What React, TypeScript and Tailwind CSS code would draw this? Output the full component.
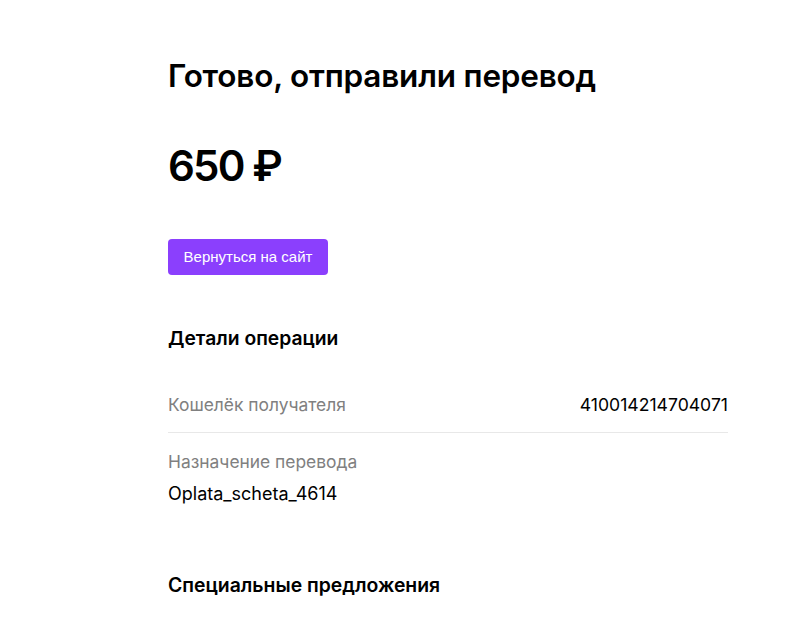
export default function App() {
  return (
    <div className="min-h-[642px] w-full bg-white font-['Inter',sans-serif] text-black">
      <div className="ml-[168px] w-[560px] pt-[56px]">
        <h1 className="text-[31.5px] font-semibold leading-[40px] tracking-[-0.2px]">
          Готово, отправили перевод
        </h1>
        <div className="mt-[42px] text-[42px] font-semibold leading-[56px] tracking-[-1.8px]">650 ₽</div>
        <button className="mt-[45px] h-[36px] w-[160px] rounded-[4px] bg-[#8b3ffd] font-['Liberation_Sans',sans-serif] text-[15px] text-white">
          Вернуться на сайт
        </button>
        <h2 className="mt-[51px] text-[19.3px] font-semibold leading-[24px]">Детали операции</h2>
        <div className="mt-[43px] flex items-center justify-between border-b border-[#e8e8e8] pb-[15px]">
          <span className="text-[17.4px] leading-[24px] text-[#808080]">Кошелёк получателя</span>
          <span className="text-[17.6px] leading-[24px]">410014214704071</span>
        </div>
        <div className="pt-[17px]">
          <div className="text-[17.4px] leading-[24px] text-[#808080]">Назначение перевода</div>
          <div className="mt-[8px] text-[18px] leading-[24px]">Oplata_scheta_4614</div>
        </div>
        <h2 className="mt-[67px] text-[19.4px] font-semibold leading-[24px]">Специальные предложения</h2>
      </div>
    </div>
  );
}
